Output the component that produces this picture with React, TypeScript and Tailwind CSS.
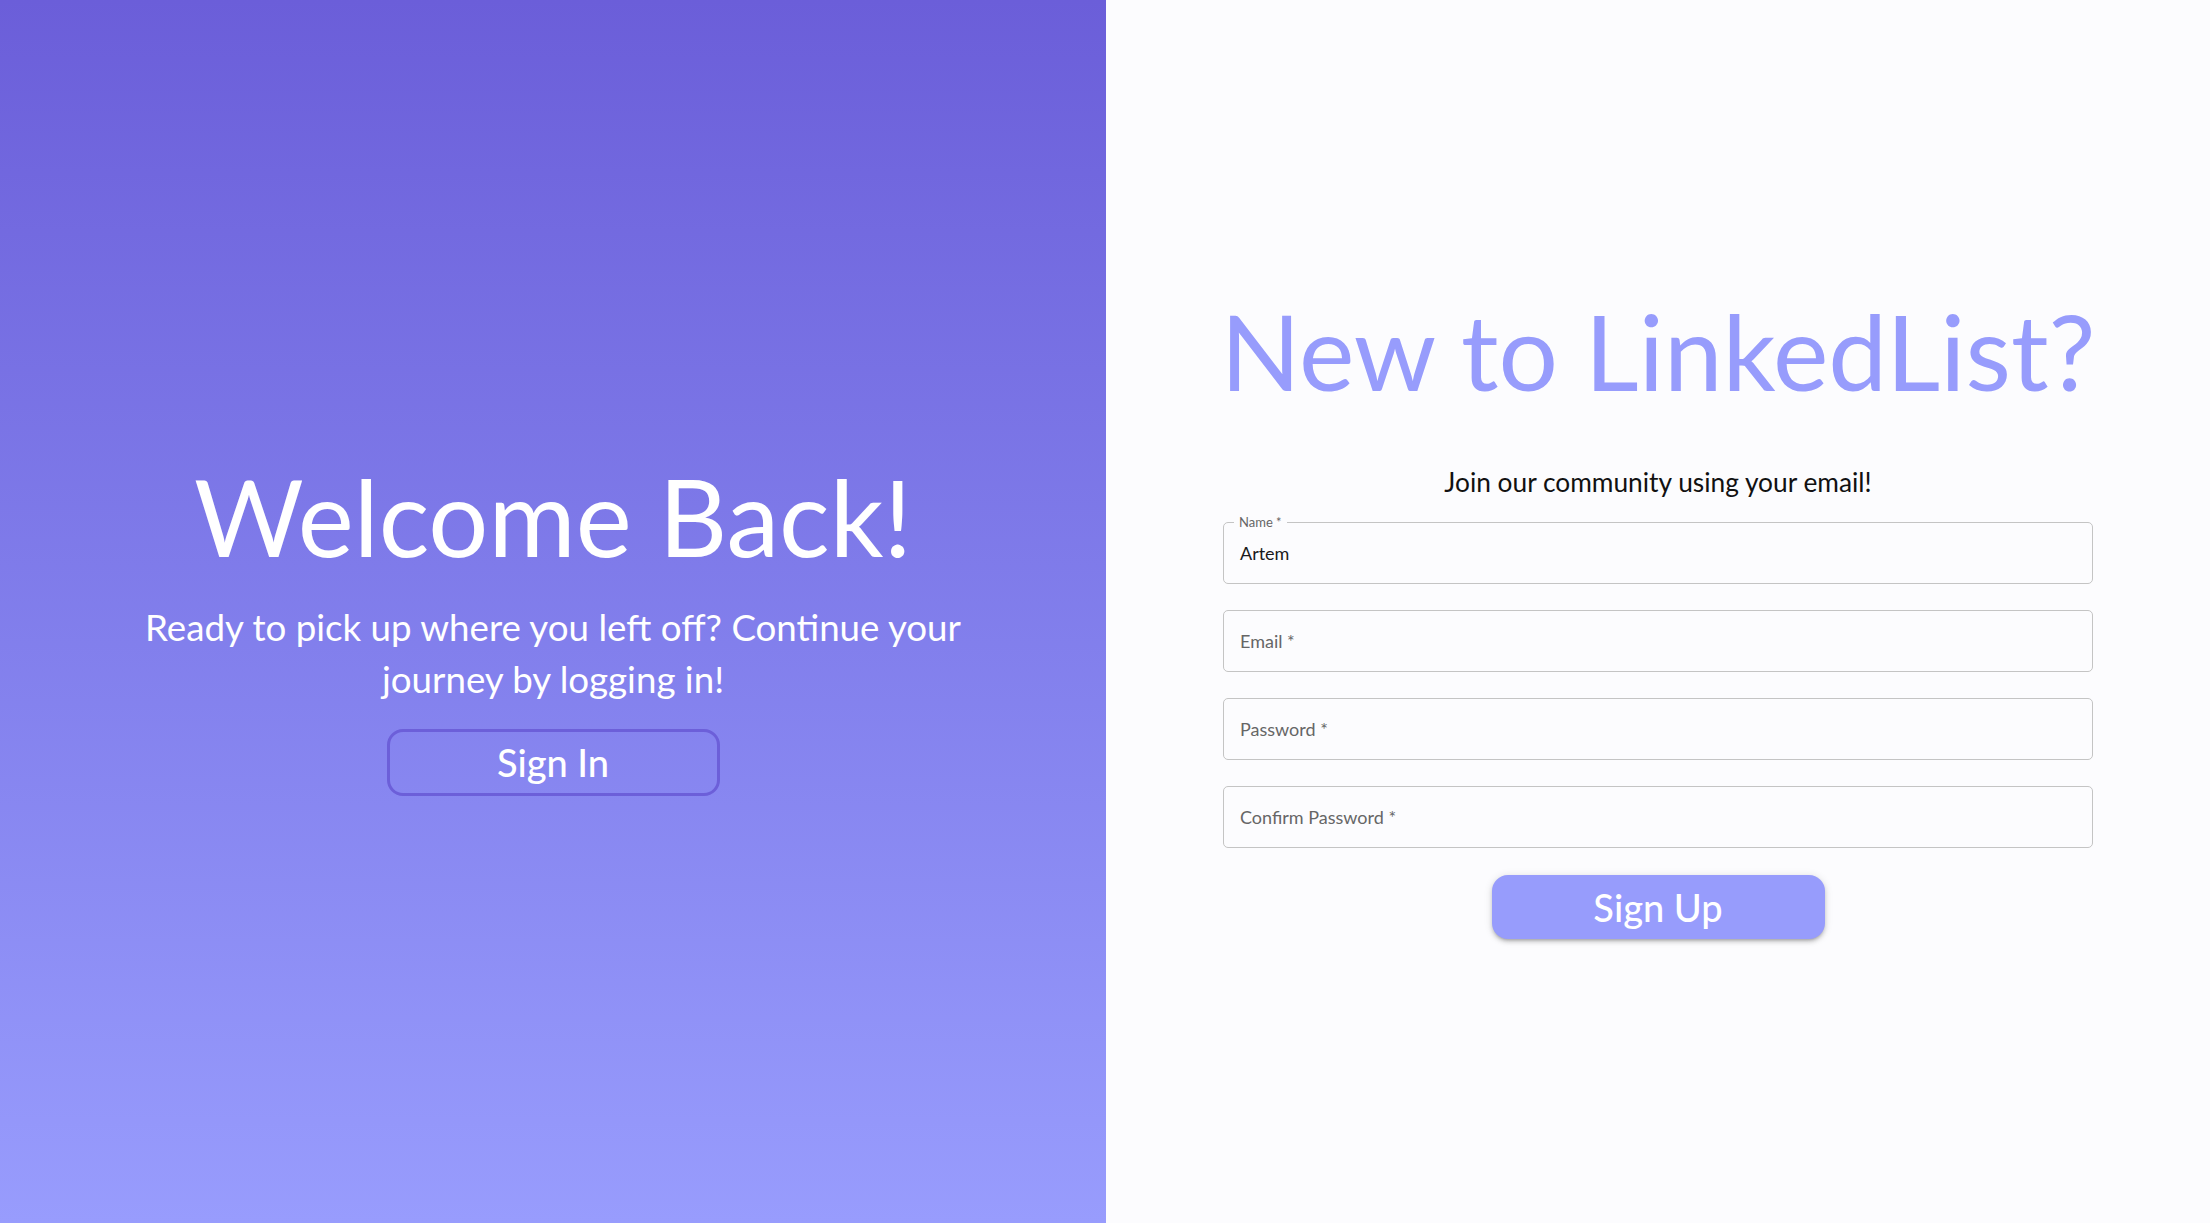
import React from "react";

function Field({ label, value }: { label: string; value?: string }) {
  if (value) {
    return (
      <div className="relative h-[62px] w-full rounded-[5px] border border-[#c4c4c4]">
        <span className="absolute left-[10px] top-[-9px] bg-[#fcfcfe] px-[5px] text-[13px] leading-[16px] text-[#666]">
          {label}
        </span>
        <div className="flex h-full items-center px-[16px] text-[18px] text-[#1a1a1a]">{value}</div>
      </div>
    );
  }
  return (
    <div className="flex h-[62px] w-full items-center rounded-[5px] border border-[#c4c4c4] px-[16px] text-[18px] text-[#666]">
      {label}
    </div>
  );
}

export default function App() {
  return (
    <div
      className="flex h-[1223px] w-[2210px] overflow-hidden"
      style={{ fontFamily: "Lato, 'Open Sans', sans-serif" }}
    >
      <div className="flex w-[1106px] flex-col items-center justify-center bg-gradient-to-b from-[#6b5ed9] to-[#989cfd] pt-[26px] text-white">
        <h1 className="whitespace-nowrap text-[106px] leading-[1.2]">Welcome Back!</h1>
        <p className="mt-[20px] w-[880px] text-center text-[36.7px] leading-[52px]">
          Ready to pick up where you left off? Continue your journey by logging in!
        </p>
        <button className="mt-[24px] flex h-[67px] w-[333px] items-center justify-center rounded-[16px] border-[3px] border-[#6c5fd9] text-[38px] font-medium text-white">
          Sign In
        </button>
      </div>
      <div className="flex flex-1 flex-col items-center justify-center bg-[#fcfcfe] pt-[3px]">
        <div className="flex w-[870px] flex-col items-center">
          <h2 className="whitespace-nowrap text-[105px] leading-[1.2] text-[#979cfc]">New to LinkedList?</h2>
          <p className="mt-[50px] text-[26.3px] text-[#111]">Join our community using your email!</p>
          <div className="mt-[20px] flex w-full flex-col gap-[26px]">
            <Field label="Name *" value="Artem" />
            <Field label="Email *" />
            <Field label="Password *" />
            <Field label="Confirm Password *" />
          </div>
          <button className="mt-[27px] flex h-[64px] w-[333px] items-center justify-center rounded-[16px] bg-[#979cfc] text-[38px] font-medium text-white shadow-[0_3px_3px_-2px_rgba(0,0,0,0.2),0_3px_4px_0_rgba(0,0,0,0.14),0_1px_8px_0_rgba(0,0,0,0.12)]">
            Sign Up
          </button>
        </div>
      </div>
    </div>
  );
}
